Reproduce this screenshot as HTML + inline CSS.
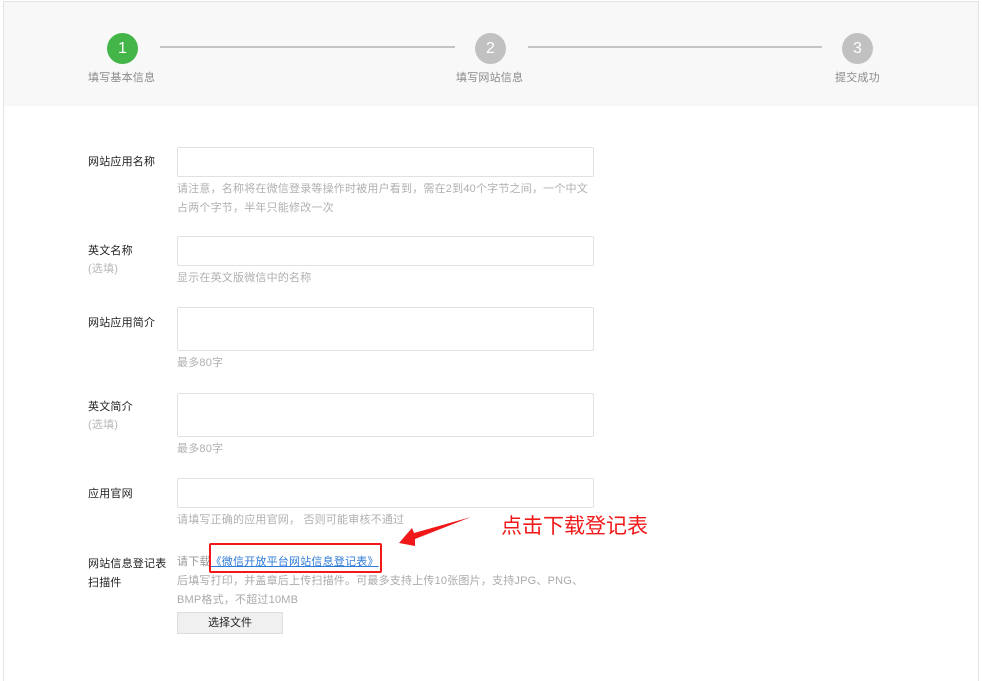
<!DOCTYPE html>
<html><head><meta charset="utf-8"><style>
*{margin:0;padding:0;box-sizing:border-box}
body{width:982px;height:666px;background:#fff;font-family:"Liberation Sans","Noto Sans CJK SC",sans-serif;font-size:11px;position:relative;overflow:hidden}
.frame{position:absolute;left:3px;top:1px;width:976px;height:680px;border:1px solid #e4e4e4;border-bottom:none}
.head{position:absolute;left:4px;top:2px;width:974px;height:104px;background:#f8f8f8}
.c{position:absolute;width:31px;height:31px;border-radius:50%;background:#c1c1c1;color:#fff;font-size:16px;text-align:center;line-height:31px}
.line{position:absolute;top:46px;height:2px;background:#c4c4c4}
.st{position:absolute;top:69px;color:#8a8a8a;font-size:11px;letter-spacing:0.2px;white-space:nowrap}
.a{position:absolute}
.lab{position:absolute;left:88px;color:#222;font-size:11px;letter-spacing:0.2px;line-height:18px}
.lab span{color:#b8b8b8}
.in{position:absolute;left:177px;width:417px;border:1px solid #e1e1e1;border-radius:2px;background:#fff}
.tip{position:absolute;left:177px;color:#b0b0b0;font-size:11px;letter-spacing:0.2px;line-height:19px;width:420px}
</style></head><body>
<div class="frame"></div>
<div class="head"></div>
<div class="c" style="left:107px;top:33px;background:#44b549">1</div>
<div class="c" style="left:475px;top:33px">2</div>
<div class="c" style="left:842px;top:33px">3</div>
<div class="line" style="left:160px;width:295px"></div>
<div class="line" style="left:528px;width:294px"></div>
<div class="st" style="left:88px">填写基本信息</div>
<div class="st" style="left:456px">填写网站信息</div>
<div class="st" style="left:835px">提交成功</div>

<div class="lab" style="top:153px">网站应用名称</div>
<div class="in" style="top:147px;height:30px"></div>
<div class="tip" style="top:180px">请注意，名称将在微信登录等操作时被用户看到，需在2到40个字节之间，一个中文占两个字节，半年只能修改一次</div>

<div class="lab" style="top:242px">英文名称<br><span>(选填)</span></div>
<div class="in" style="top:236px;height:30px"></div>
<div class="tip" style="top:269px">显示在英文版微信中的名称</div>

<div class="lab" style="top:314px">网站应用简介</div>
<div class="in" style="top:307px;height:44px"></div>
<div class="tip" style="top:354px">最多80字</div>

<div class="lab" style="top:398px">英文简介<br><span>(选填)</span></div>
<div class="in" style="top:393px;height:44px"></div>
<div class="tip" style="top:440px">最多80字</div>

<div class="lab" style="top:485px">应用官网</div>
<div class="in" style="top:478px;height:30px"></div>
<div class="tip" style="top:511px">请填写正确的应用官网， 否则可能审核不通过</div>

<div class="lab" style="top:555px;line-height:19px">网站信息登记表<br>扫描件</div>
<div class="tip" style="top:553px;color:#999">请下载<span style="color:#2d7bd8;text-decoration:underline">《微信开放平台网站信息登记表》</span></div>
<div class="tip" style="top:572px;color:#aaa;width:425px">后填写打印，并盖章后上传扫描件。可最多支持上传10张图片，支持JPG、PNG、BMP格式，不超过10MB</div>
<div class="a" style="left:177px;top:612px;width:106px;height:22px;background:#f0f0f0;border:1px solid #ddd;text-align:center;line-height:20px;color:#222;font-size:11px">选择文件</div>

<div class="a" style="left:209px;top:543px;width:173px;height:30px;border:2px solid #f01818;border-radius:2px"></div>
<svg class="a" style="left:0;top:0" width="982" height="666"><polygon points="399,543 412,528 414,533 471,517 415,539 415,546" fill="#f01818"/></svg>
<div class="a" style="left:501px;top:510px;color:#f01818;font-size:21px;white-space:nowrap">点击下载登记表</div>
</body></html>
